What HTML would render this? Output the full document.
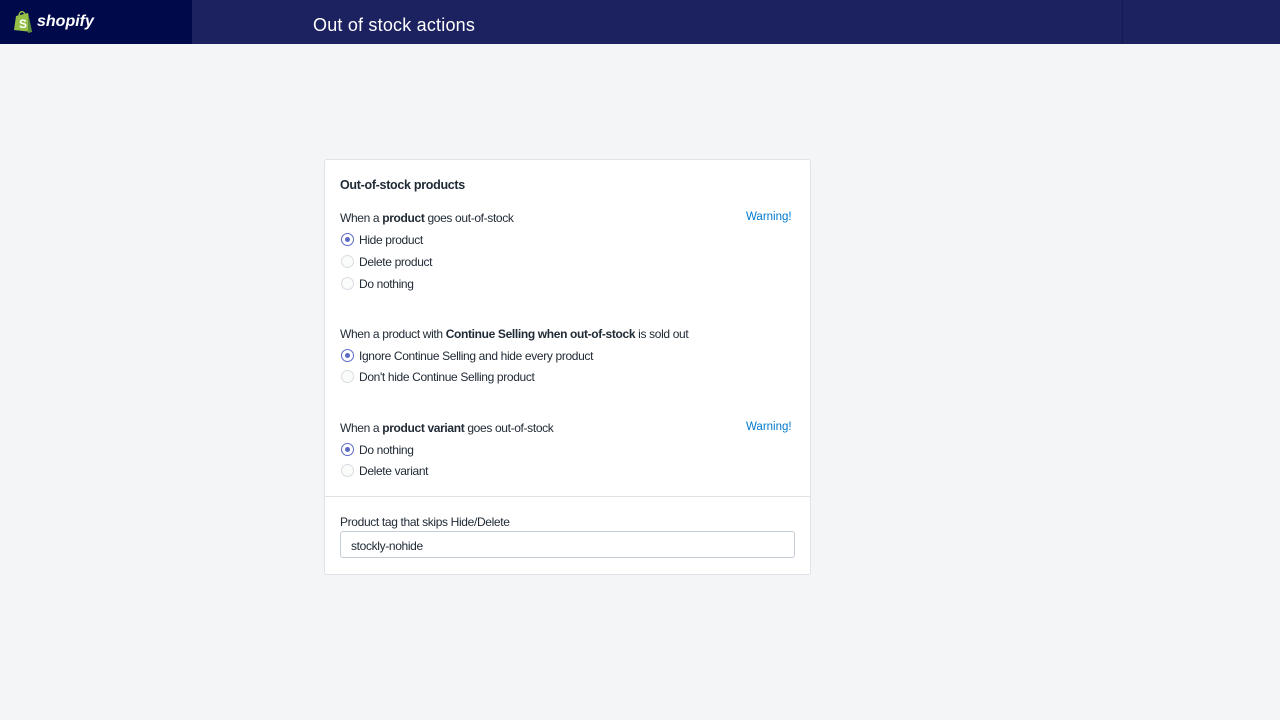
<!DOCTYPE html>
<html><head><style>
body{margin:0;width:1280px;height:720px;background:#f4f5f7;font-family:"Liberation Sans",sans-serif;position:relative;overflow:hidden;color:#212b36}
.hdr{position:absolute;left:0;top:0;width:1280px;height:44px;background:#1c2260}
.logo{position:absolute;left:0;top:0;width:192px;height:44px;background:#000a4b}
.sep{position:absolute;left:1122px;top:0;width:1px;height:44px;background:#141a4d}
.title{position:absolute;left:313px;top:15px;color:#fff;font-size:18px;letter-spacing:0.2px}
.card{position:absolute;left:324px;top:159px;width:487px;height:416px;background:#fff;border:1px solid #dfe3e8;border-radius:3px;box-sizing:border-box}
.t{position:absolute;font-size:12px;letter-spacing:-0.35px;white-space:nowrap}
.r{position:absolute;width:11px;height:11px;border-radius:50%;border:1px solid #d8dce2;background:#fafbfb}
.r.on{border-color:#5c6ac4;background:#fff}
.r.on::after{content:"";position:absolute;left:3px;top:3px;width:5px;height:5px;border-radius:50%;background:#5c6ac4}
.w{color:#007ace;font-size:11.5px;letter-spacing:0}
</style></head><body>
<div class="hdr"><div class="logo">
<svg style="position:absolute;left:13px;top:10px" width="22" height="24" viewBox="0 0 22 24"><path d="M3 6 L15 3 L19 22 L1 20 Z" fill="#95bf47"/><path d="M15 3 L19 22 L15 23 Z" fill="#5e8e3e"/><path d="M6 6 C6 1 11 0 12 5" fill="none" stroke="#95bf47" stroke-width="1.5"/><text x="6" y="18" font-size="12" font-weight="bold" fill="#fff" font-family="Liberation Sans">S</text></svg>
<span style="position:absolute;left:37px;top:13px;color:#fff;font-weight:bold;font-style:italic;font-size:16px">shopify</span></div>
<div class="sep"></div><div class="title">Out of stock actions</div></div>
<div class="card">
<div class="t" style="left:15px;top:18px;font-size:12.5px;font-weight:bold;letter-spacing:-0.3px">Out-of-stock products</div>
<div class="t" style="left:15px;top:51px">When a <b>product</b> goes out-of-stock</div>
<div class="t w" style="left:421px;top:51px">Warning!</div>
<div class="r on" style="left:16px;top:73px"></div><div class="t" style="left:34px;top:73px">Hide product</div>
<div class="r" style="left:16px;top:95px"></div><div class="t" style="left:34px;top:95px">Delete product</div>
<div class="r" style="left:16px;top:117px"></div><div class="t" style="left:34px;top:117px">Do nothing</div>
<div class="t" style="left:15px;top:167px">When a product with <b>Continue Selling when out-of-stock</b> is sold out</div>
<div class="r on" style="left:16px;top:189px"></div><div class="t" style="left:34px;top:189px">Ignore Continue Selling and hide every product</div>
<div class="r" style="left:16px;top:210px"></div><div class="t" style="left:34px;top:210px">Don't hide Continue Selling product</div>
<div class="t" style="left:15px;top:261px">When a <b>product variant</b> goes out-of-stock</div>
<div class="t w" style="left:421px;top:261px">Warning!</div>
<div class="r on" style="left:16px;top:283px"></div><div class="t" style="left:34px;top:283px">Do nothing</div>
<div class="r" style="left:16px;top:304px"></div><div class="t" style="left:34px;top:304px">Delete variant</div>
<div style="position:absolute;left:0;top:336px;width:485px;height:1px;background:#dfe3e8"></div>
<div class="t" style="left:15px;top:355px">Product tag that skips Hide/Delete</div>
<div style="position:absolute;left:15px;top:371px;width:455px;height:27px;border:1px solid #c4cdd5;border-radius:3px;box-sizing:border-box"></div>
<div class="t" style="left:26px;top:379px">stockly-nohide</div>
</div>
</body></html>
